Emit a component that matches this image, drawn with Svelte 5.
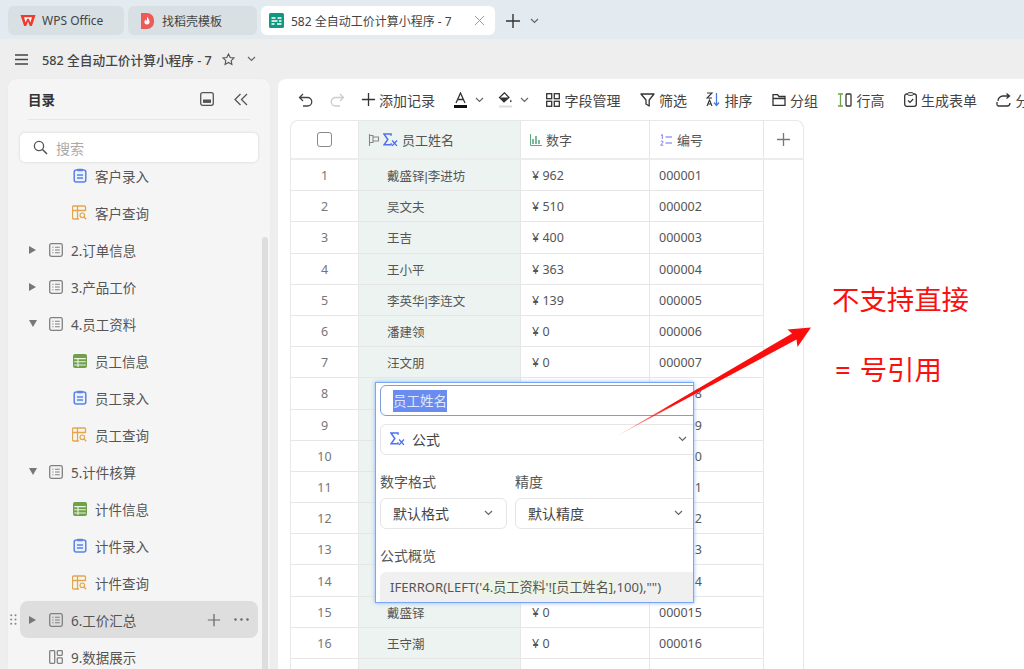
<script>
  const side = [
    { t: '客户录入', i: 'form', c: 1 },
    { t: '客户查询', i: 'query', c: 1 },
    { t: '2.订单信息', i: 'sheet', a: 'r' },
    { t: '3.产品工价', i: 'sheet', a: 'r' },
    { t: '4.员工资料', i: 'sheet', a: 'd' },
    { t: '员工信息', i: 'table', c: 1 },
    { t: '员工录入', i: 'form', c: 1 },
    { t: '员工查询', i: 'query', c: 1 },
    { t: '5.计件核算', i: 'sheet', a: 'd' },
    { t: '计件信息', i: 'table', c: 1 },
    { t: '计件录入', i: 'form', c: 1 },
    { t: '计件查询', i: 'query', c: 1 },
    { t: '6.工价汇总', i: 'sheet', a: 'r', on: 1 },
    { t: '9.数据展示', i: 'dash' }
  ];
  const names = ['戴盛铎|李进坊', '吴文夫', '王吉', '王小平', '李英华|李连文', '潘建领', '汪文朋', '', '', '', '', '', '', '', '戴盛铎', '王守潮'];
  const money = [962, 510, 400, 363, 139, 0, 0, 0, 0, 0, 0, 0, 0, 0, 0, 0];
  const rows = names.map((n, k) => ({
    no: k + 1,
    name: n,
    val: money[k],
    code: String(k + 1).padStart(6, '0')
  }));
</script>

{#snippet chev(cls)}
  <svg class={cls} width="9" height="6" viewBox="0 0 9 6"><path d="M1 1l3.5 3.5L8 1" fill="none" stroke="#666" stroke-width="1.2"/></svg>
{/snippet}

{#snippet plus(size, col)}
  <svg width={size} height={size} viewBox="0 0 16 16"><path d="M8 1v14M1 8h14" stroke={col} stroke-width="1.4" fill="none"/></svg>
{/snippet}

{#snippet sigma()}
  <svg class="sigma" width="15" height="14" viewBox="0 0 14 13"><path d="M7.500 2.500V1H1l3.500 5L1 11h6.500V9.500" fill="none" stroke="#4f72ee" stroke-width="1.4"/><path d="M8.500 7l4.500 5M13 7l-4.500 5" stroke="#4f72ee" stroke-width="1.3"/></svg>
{/snippet}

{#snippet icon(k)}
  {#if k === 'form'}
    <svg width="14" height="15" viewBox="0 0 14 15"><rect x="1.200" y="2" width="11.600" height="12" rx="2" fill="#eaf0fd" stroke="#5b82e6" stroke-width="1.500"/><rect x="4" y="0.700" width="6" height="2.600" rx="1" fill="#5b82e6"/><path d="M4 7h6M4 10h6" stroke="#5b82e6" stroke-width="1.300"/></svg>
  {:else if k === 'query'}
    <svg width="15" height="15" viewBox="0 0 15 15"><path d="M13.500 6V2a1 1 0 0 0-1-1h-11a1 1 0 0 0-1 1v11a1 1 0 0 0 1 1H7M.5 5.500h13M5.500 1v13" fill="none" stroke="#e2a64e" stroke-width="1.300"/><circle cx="10.300" cy="10.300" r="2.300" fill="none" stroke="#e2a64e" stroke-width="1.200"/><path d="M12 12l2.200 2.200" stroke="#e2a64e" stroke-width="1.300"/></svg>
  {:else if k === 'table'}
    <svg width="14" height="14" viewBox="0 0 14 14"><rect x="0" y="0" width="14" height="14" rx="2" fill="#6fa04c"/><path d="M1.200 4.600h11.600M1.200 7.800h11.600M1.200 11h11.600M5 4v9" stroke="#eef4e8" stroke-width="1.100"/></svg>
  {:else if k === 'sheet'}
    <svg width="14" height="14" viewBox="0 0 14 14"><rect x=".7" y=".7" width="12.600" height="12.600" rx="1.800" fill="none" stroke="#808080" stroke-width="1.300"/><path d="M3.300 4.200h1.200M6 4.200h4.800M3.300 7h1.200M6 7h4.800M3.300 9.800h1.200M6 9.800h4.800" stroke="#808080" stroke-width="1.100"/></svg>
  {:else}
    <svg width="14" height="14" viewBox="0 0 14 14"><rect x=".7" y=".7" width="5" height="12.600" rx=".8" fill="none" stroke="#808080" stroke-width="1.300"/><rect x="8.300" y=".7" width="5" height="4.600" rx=".8" fill="none" stroke="#808080" stroke-width="1.300"/><rect x="8.300" y="7.800" width="5" height="5.500" rx=".8" fill="none" stroke="#808080" stroke-width="1.300"/></svg>
  {/if}
{/snippet}

<div class="page">
  <header class="tabs">
    <div class="tab">
      <svg width="16" height="13" viewBox="0 0 16 13"><path d="M.5 1h15l-3.600 11H9.800L8 7.500 6.200 12H4.100z" fill="#ef3a2c"/><path d="M4 3.200l1.700 5.200L7 4.800h2l1.300 3.600L12 3.200z" fill="#fff"/></svg>
      <span>WPS Office</span>
    </div>
    <div class="tab t2">
      <svg width="14" height="16" viewBox="0 0 14 16"><path d="M1 0h6a7 7 0 0 1 7 7v2a7 7 0 0 1-7 7H1z" fill="#ee5a55"/><path d="M7.300 3.500c.6 2 2.200 3 2.200 5.200A2.600 2.600 0 0 1 7 11.500a2.500 2.500 0 0 1-2.500-2.700c0-1 .6-1.700 1.200-2.200.1 1 .5 1.400 1 1.500.4-1.300.3-3 .6-4.600z" fill="#fff"/></svg>
      <span>找稻壳模板</span>
    </div>
    <div class="tab active">
      <svg width="15" height="15" viewBox="0 0 15 15"><rect width="15" height="15" rx="1.500" fill="#0f9a80"/><path d="M2.500 5h4M8.500 5h4M2.500 8h6M10 8h2.500M2.500 11h3M8 11h4.500" stroke="#fff" stroke-width="1.300"/></svg>
      <span class="grow">582 全自动工价计算小程序 - 7</span>
      <svg width="11" height="11" viewBox="0 0 11 11"><path d="M1 1l9 9M10 1l-9 9" stroke="#999" stroke-width="1"/></svg>
    </div>
    <div class="newtab">{@render plus(16, '#333')}{@render chev('')}</div>
  </header>

  <div class="titlebar">
    <svg width="13" height="11" viewBox="0 0 13 11"><path d="M0 1h13M0 5.500h13M0 10h13" stroke="#444" stroke-width="1.300"/></svg>
    <span class="doc">582 全自动工价计算小程序 - 7</span>
    <svg width="13" height="13" viewBox="0 0 13 13"><path d="M6.500 1l1.700 3.500 3.800.5-2.800 2.600.7 3.800-3.400-1.900-3.400 1.900.7-3.800L1 5l3.800-.5z" fill="none" stroke="#555" stroke-width="1.100"/></svg>
    {@render chev('ml')}
  </div>

  <div class="content">
    <aside class="sidebar">
      <div class="sidehead">
        <strong>目录</strong>
        <div class="sidebtns">
          <svg width="14" height="14" viewBox="0 0 14 14"><rect x=".7" y=".7" width="12.600" height="12.600" rx="2" fill="none" stroke="#555" stroke-width="1.300"/><rect x="3" y="7.500" width="8" height="3.400" fill="#555"/></svg>
          <svg width="14" height="13" viewBox="0 0 14 13"><path d="M6.500 1L1 6.500 6.500 12M13 1L7.500 6.500 13 12" fill="none" stroke="#555" stroke-width="1.300"/></svg>
        </div>
      </div>
      <div class="search">
        <svg width="15" height="15" viewBox="0 0 15 15"><circle cx="6" cy="6" r="4.600" fill="none" stroke="#555" stroke-width="1.300"/><path d="M9.500 9.500l4.500 4.500" stroke="#555" stroke-width="1.600"/></svg>
        <span>搜索</span>
      </div>
      <ul class="tree">
        {#each side as s}
          <li class:child={s.c} class:on={s.on}>
            {#if s.on}
              <svg class="grip" width="7" height="11" viewBox="0 0 7 11"><g fill="#888"><circle cx="1.200" cy="1.300" r="1"/><circle cx="5.500" cy="1.300" r="1"/><circle cx="1.200" cy="5.500" r="1"/><circle cx="5.500" cy="5.500" r="1"/><circle cx="1.200" cy="9.700" r="1"/><circle cx="5.500" cy="9.700" r="1"/></g></svg>
            {/if}
            <span class="arrow">
              {#if s.a === 'r'}
                <svg width="7" height="8" viewBox="0 0 7 8"><path d="M0 0l7 4-7 4z" fill="#777"/></svg>
              {:else if s.a === 'd'}
                <svg width="8" height="7" viewBox="0 0 8 7"><path d="M0 0h8L4 7z" fill="#777"/></svg>
              {/if}
            </span>
            <span class="ico">{@render icon(s.i)}</span>
            <span class="label">{s.t}</span>
            {#if s.on}
              <span class="acts">
                {@render plus(14, '#666')}
                <svg width="15" height="3" viewBox="0 0 15 3"><g fill="#666"><circle cx="1.500" cy="1.500" r="1.200"/><circle cx="7.500" cy="1.500" r="1.200"/><circle cx="13.500" cy="1.500" r="1.200"/></g></svg>
              </span>
            {/if}
          </li>
        {/each}
      </ul>
      <div class="scroll"></div>
    </aside>

    <main class="main">
      <div class="toolbar">
        <svg class="hist" width="16" height="14" viewBox="0 0 16 14"><path d="M5 1L1.500 4.500 5 8M2 4.500h7.500a4 4 0 0 1 0 8.500H5" fill="none" stroke="#444" stroke-width="1.300"/></svg>
        <svg class="hist" width="16" height="14" viewBox="0 0 16 14"><path d="M11 1l3.500 3.500L11 8M14 4.500H6.500a4 4 0 0 0 0 8.500H11" fill="none" stroke="#ccc" stroke-width="1.300"/></svg>
        <span class="tool add">{@render plus(15, '#333')}添加记录</span>
        <span class="tool fmt">
          <svg width="15" height="16" viewBox="0 0 15 16"><path d="M3 11L7.500 1 12 11M4.800 7.500h5.400" fill="none" stroke="#333" stroke-width="1.300"/><rect x="1" y="13" width="13" height="3" fill="#111"/></svg>
          {@render chev('')}
        </span>
        <span class="tool fmt">
          <svg width="15" height="16" viewBox="0 0 15 16"><path d="M6.500 .8L1.500 5.500 6 10l5-4.500z" fill="none" stroke="#333" stroke-width="1.200"/><path d="M2 5.500h8.500L6 10z" fill="#333"/><path d="M12.800 7.500c1 1.300 1 2.800 0 2.800s-1-1.500 0-2.800z" fill="#333"/><rect x="1" y="13.500" width="13" height="2" fill="#ddd"/></svg>
          {@render chev('')}
        </span>
        <span class="tool">
          <svg width="14" height="14" viewBox="0 0 14 14"><g fill="none" stroke="#333" stroke-width="1.300"><rect x=".7" y=".7" width="5" height="5"/><rect x="8.300" y=".7" width="5" height="5"/><rect x=".7" y="8.300" width="5" height="5"/><rect x="8.300" y="8.300" width="5" height="5"/></g></svg>字段管理
        </span>
        <span class="tool">
          <svg width="15" height="14" viewBox="0 0 15 14"><path d="M1 1h13L9.200 7v6L6 11V7z" fill="none" stroke="#333" stroke-width="1.300" stroke-linejoin="round"/></svg>筛选
        </span>
        <span class="tool">
          <svg width="14" height="15" viewBox="0 0 14 15"><path d="M1 1h5L1 6h5M1 14l2.500-6L6 14M1.800 12h3.400" fill="none" stroke="#333" stroke-width="1.100"/><path d="M10.500 1v12M8 10.500l2.500 3 2.500-3" fill="none" stroke="#4a78e6" stroke-width="1.300"/></svg>排序
        </span>
        <span class="tool">
          <svg width="14" height="13" viewBox="0 0 14 13"><path d="M1 3V1.700h4.500L7 3.500h6v8.800H1zM1 5.500h12" fill="none" stroke="#333" stroke-width="1.300"/></svg>分组
        </span>
        <span class="tool">
          <svg width="15" height="14" viewBox="0 0 15 14"><path d="M1 1h5M1 13h5M3.500 1v12" fill="none" stroke="#6fa04c" stroke-width="1.300"/><rect x="9" y="1" width="5" height="12" rx="1" fill="none" stroke="#333" stroke-width="1.300"/></svg>行高
        </span>
        <span class="tool">
          <svg width="13" height="15" viewBox="0 0 13 15"><rect x=".7" y="2" width="11.600" height="12.300" rx="2" fill="none" stroke="#333" stroke-width="1.300"/><rect x="3.700" y=".7" width="5.600" height="2.600" rx="1" fill="#fff" stroke="#333" stroke-width="1"/><path d="M4 8.500l2 2 3.200-3.500" fill="none" stroke="#333" stroke-width="1.200"/></svg>生成表单
        </span>
        <span class="tool">
          <svg width="15" height="14" viewBox="0 0 15 14"><path d="M2 8a5 5 0 0 1 5-5h6M10.500.5L13.500 3l-3 2.500M1 9v2.500a1.500 1.500 0 0 0 1.500 1.500H11a3 3 0 0 0 3-3" fill="none" stroke="#333" stroke-width="1.300"/></svg>分享
        </span>
      </div>

      <div class="table">
        <div class="thead">
          <div class="c0 cell center"><span class="check"></span></div>
          <div class="c1 cell">
            <svg width="12" height="12" viewBox="0 0 12 12"><path d="M1.500 0v12M1.500 1.500h3.500v7H1.500M5 3h5.500v4H5" fill="none" stroke="#888" stroke-width="1.100"/></svg>
            {@render sigma()}
            <span class="hname">员工姓名</span>
          </div>
          <div class="c2 cell">
            <svg width="12" height="12" viewBox="0 0 12 12"><path d="M.5 0v11.500H12" fill="none" stroke="#5ea77f" stroke-width="1"/><path d="M3 5v5M6 2v8M9 6v4" stroke="#5ea77f" stroke-width="1.600"/></svg>
            <span>数字</span>
          </div>
          <div class="c3 cell">
            <svg width="12" height="12" viewBox="0 0 12 12"><path d="M1 1.500L2.300.6v4.400M.7 7.600a1.300 1.300 0 0 1 2.400.4c0 1-2.400 2-2.400 3.200h2.600" fill="none" stroke="#6a6cf0" stroke-width=".9"/><path d="M5.500 3h6.500M5.500 9h6.500" stroke="#6a6cf0" stroke-width="1.200"/></svg>
            <span>编号</span>
          </div>
          <div class="c4 cell center">{@render plus(15, '#777')}</div>
        </div>
        {#each rows as r}
          <div class="row">
            <div class="c0 cell center num">{r.no}</div>
            <div class="c1 cell name">{r.name}</div>
            <div class="c2 cell">¥ {r.val}</div>
            <div class="c3 cell">{r.code}</div>
          </div>
        {/each}
        <div class="row last">
          <div class="c0 cell"></div>
          <div class="c1 cell name"></div>
          <div class="c2 cell"></div>
          <div class="c3 cell"></div>
        </div>
      </div>
    </main>
  </div>

  <div class="popup">
    <div class="pinput"><span class="sel">员工姓名</span></div>
    <div class="pselect wide">
      {@render sigma()}
      <span class="grow">公式</span>
      {@render chev('')}
    </div>
    <div class="pcols">
      <div class="pcol left">
        <div class="plabel">数字格式</div>
        <div class="pselect small"><span class="grow">默认格式</span>{@render chev('')}</div>
      </div>
      <div class="pcol right">
        <div class="plabel">精度</div>
        <div class="pselect small"><span class="grow">默认精度</span>{@render chev('')}</div>
      </div>
    </div>
    <div class="plabel over">公式概览</div>
    <div class="formula">IFERROR(LEFT(<span class="ref">'4.员工资料'![员工姓名]</span>,100),"")</div>
  </div>

  <svg class="annot" width="1024" height="669" viewBox="0 0 1024 669">
    <defs>
      <linearGradient id="ar" x1="617" y1="436" x2="672" y2="405" gradientUnits="userSpaceOnUse">
        <stop offset="0" stop-color="#ff3b3b" stop-opacity=".3"/>
        <stop offset="1" stop-color="#fb0d0d"/>
      </linearGradient>
    </defs>
    <path d="M617 436L792 333.500 787.500 329.500 811 327.500 797.500 347 796.500 339.500z" fill="url(#ar)"/>
  </svg>
  <div class="note n1">不支持直接</div>
  <div class="note n2"><span class="eq">=</span>号引用</div>
</div>

<style>
  :global(body) { margin: 0; }
  .page {
    position: relative;
    width: 1024px;
    height: 669px;
    overflow: hidden;
    background: #eeeeee;
    font-family: "Noto Sans", "Noto Sans CJK SC", sans-serif;
    color: #555;
    font-size: 13px;
  }
  svg { flex: none; display: block; }
  .grow { flex: 1; }

  .tabs {
    height: 39px;
    background: #e3ebf1;
    display: flex;
    align-items: flex-start;
    gap: 4px;
    padding: 6px 0 0 8px;
    box-sizing: border-box;
  }
  .tab {
    width: 116px;
    height: 29px;
    box-sizing: border-box;
    background: #d8e0e4;
    border-radius: 6px;
    display: flex;
    align-items: center;
    gap: 6px;
    padding-left: 12px;
    font-size: 12px;
    color: #444;
  }
  .t2 { width: 129px; gap: 8px; }
  .tab.active { width: 234px; background: #fff; padding: 0 10px 0 8px; gap: 7px; color: #444; }
  .newtab { display: flex; align-items: center; gap: 9px; margin: 7px 0 0 6px; }

  .titlebar {
    height: 40px;
    display: flex;
    align-items: center;
    padding-left: 15px;
    box-sizing: border-box;
  }
  .doc { margin: 0 10px 0 14px; font-size: 12.7px; color: #444; font-weight: 500; }
  .titlebar :global(.ml) { margin-left: 12px; }

  .content { display: flex; gap: 8px; padding-left: 8px; height: 590px; }

  .sidebar {
    position: relative;
    width: 262px;
    flex: none;
    background: #f5f5f5;
    border-radius: 8px 8px 0 0;
    overflow: hidden;
    box-shadow: 0 0 1px #ddd;
  }
  .sidehead {
    height: 41px;
    margin: 0 20px;
    border-bottom: 1px solid #e6e6e6;
    box-sizing: border-box;
    display: flex;
    align-items: center;
    justify-content: space-between;
  }
  .sidehead strong { font-size: 13.5px; color: #333; font-weight: 700; }
  .sidebtns { display: flex; gap: 20px; align-items: center; margin-right: 2px; }
  .search {
    position: relative;
    z-index: 1;
    margin: 13px 0 0 12px;
    width: 238px;
    height: 29px;
    background: #fff;
    border-radius: 5px;
    box-shadow: 0 0 3px rgba(0, 0, 0, .15);
    display: flex;
    align-items: center;
    gap: 8px;
    padding-left: 13px;
    box-sizing: border-box;
    color: #aaa;
    font-size: 14px;
  }
  .tree { list-style: none; margin: -5px 0 0; padding: 0; }
  .tree li {
    position: relative;
    height: 37px;
    width: 238px;
    margin-left: 12px;
    display: flex;
    align-items: center;
    border-radius: 8px;
    font-size: 13.5px;
    color: #555;
  }
  .tree li.on { background: #dedede; }
  .grip { position: absolute; left: -10px; top: 13px; }
  .arrow { width: 25px; padding-left: 9px; box-sizing: border-box; }
  .ico { width: 14px; display: flex; justify-content: center; margin-left: 4px; }
  .label { margin-left: 8px; }
  .child .arrow { width: 48px; }
  .child .ico { width: 15px; }
  .acts { margin-left: auto; margin-right: 9px; display: flex; align-items: center; gap: 13px; }
  .scroll {
    position: absolute;
    right: 2px;
    top: 158px;
    bottom: 0;
    width: 6px;
    background: #dedede;
    border-radius: 3px 3px 0 0;
  }

  .main {
    flex: 1;
    min-width: 0;
    background: #fff;
    border-radius: 8px 0 0 0;
    padding-left: 12px;
    overflow: hidden;
  }
  .toolbar {
    height: 41px;
    display: flex;
    align-items: center;
    white-space: nowrap;
    color: #444;
    font-size: 14px;
  }
  .hist { margin: 0 15px 0 8px; }
  .hist + .hist { margin: 0 16px 0 0; }
  .tool { display: inline-flex; align-items: center; gap: 4.5px; margin-right: 19px; flex: none; }
  .tool.add { gap: 3px; margin-right: 18px; }
  .fmt { gap: 7px; margin-right: 14px; }
  .fmt + .tool:not(.fmt) { margin-left: 3px; }

  .table {
    width: 514px;
    box-sizing: border-box;
    border: 1px solid #e8e8e8;
    border-bottom: 0;
    border-radius: 8px 8px 0 0;
    height: 560px;
    overflow: hidden;
  }
  .thead {
    display: flex;
    height: 37px;
    border-bottom: 2px solid #ececec;
    box-sizing: content-box;
  }
  .row {
    display: flex;
    height: 31.2px;
    width: 473px;
    box-sizing: border-box;
    border-bottom: 1px solid #e6e6e6;
  }
  .row .cell { padding-top: 1px; }
  .row.last { border-bottom: 0; }
  .cell {
    display: flex;
    align-items: center;
    box-sizing: border-box;
    border-right: 1px solid #e6e6e6;
    padding-left: 8px;
    gap: 5px;
    color: #555;
    font-size: 12.5px;
  }
  .c0 { width: 68px; padding-left: 0; }
  .c1 { width: 162px; background: #ecf3f0; }
  .c2 { width: 129px; padding-left: 11px; }
  .c3 { width: 114px; padding-left: 9px; }
  .c4 { width: 39px; border-right: 0; padding: 0; }
  .center { justify-content: center; }
  .num { color: #777; }
  .name { padding-left: 28px; font-family: "Liberation Sans", "Noto Sans CJK SC", sans-serif; }
  .check { width: 13px; height: 13px; border: 1px solid #888; border-radius: 3px; }
  .thead .c1 { gap: 3px; padding-left: 9px; }
  .thead .c2 { gap: 4px; padding-left: 9px; }
  .thead .c3 { gap: 5px; padding-left: 10px; }
  .hname { margin-left: 1px; }
  .thead span { font-size: 13px; }

  .popup {
    position: absolute;
    left: 375px;
    top: 382px;
    width: 319px;
    height: 221px;
    box-sizing: border-box;
    background: #fff;
    border: 1px solid #7aa7f5;
    box-shadow: 0 0 4px #8db6fa;
    padding: 2px 0 0 4px;
    overflow: hidden;
    color: #444;
    z-index: 2;
  }
  .pinput {
    width: 330px;
    height: 31px;
    box-sizing: border-box;
    border: 1px solid #7f9ce0;
    border-radius: 6px;
    display: flex;
    align-items: center;
    padding-left: 12px;
  }
  .sel { background: #6a8bef; color: #dfe7ff; font-size: 13.5px; line-height: 22px; padding: 0; }
  .pselect {
    display: flex;
    align-items: center;
    box-sizing: border-box;
    height: 31px;
    border: 1px solid #e6e6e6;
    border-radius: 6px;
    padding-left: 12px;
    padding-bottom: 2px;
    font-size: 14px;
    gap: 7px;
  }
  .wide { width: 330px; margin-top: 8px; padding-left: 9px; padding-right: 22px; }
  .pcols { display: flex; gap: 8px; margin-top: 18px; }
  .pcol.left { width: 127px; flex: none; }
  .pcol.right { width: 190px; flex: none; }
  .plabel { font-size: 14px; line-height: 18px; color: #555; }
  .small { margin-top: 7px; padding-right: 13px; }
  .right .small { padding-right: 21px; }
  .over { margin-top: 18px; }
  .formula {
    width: 330px;
    height: 40px;
    margin-top: 7px;
    background: #f0f0f0;
    border-radius: 6px;
    padding: 5px 0 0 10px;
    box-sizing: border-box;
    font-size: 13.1px;
    color: #555;
    white-space: nowrap;
  }
  .ref { background: #eff5e6; }

  .annot { position: absolute; left: 0; top: 0; z-index: 3; pointer-events: none; }
  .note {
    position: absolute;
    color: #fb1010;
    font-size: 27.4px;
    line-height: 36px;
    white-space: nowrap;
    z-index: 3;
  }
  .n1 { left: 832px; top: 282px; }
  .n2 { left: 835px; top: 352px; }
  .eq { margin-right: 9px; }
</style>
